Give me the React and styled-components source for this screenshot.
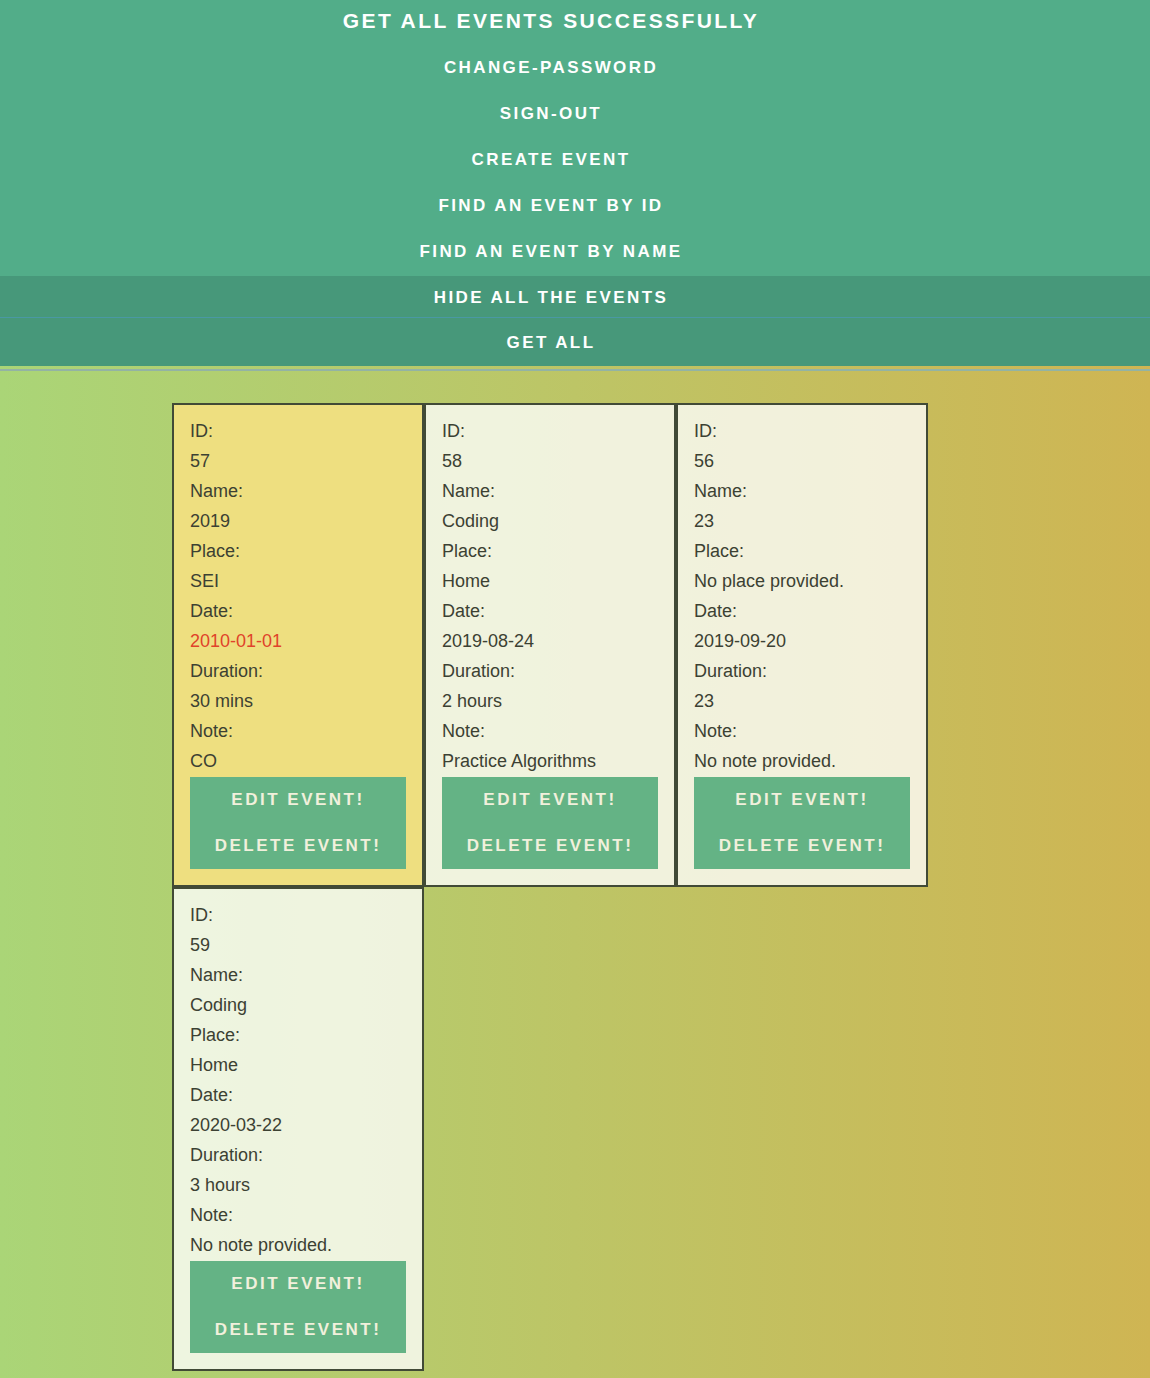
import React from 'react'
import styled, { createGlobalStyle } from 'styled-components'

const GlobalStyle = createGlobalStyle`
  html, body {
    margin: 0;
    padding: 0;
  }
  body {
    font-family: "Liberation Sans", Arial, sans-serif;
    background: linear-gradient(to right, #aad577, #bdc566 50%, #cfb553);
    min-height: 1378px;
  }
`

const Page = styled.div`
  min-height: 1378px;
`

const Nav = styled.nav`
  background: #52ad89;
  display: flex;
  flex-direction: column;
`

const Title = styled.h1`
  margin: 0;
  box-sizing: border-box;
  height: 44px;
  padding: 0 48px 3px 0;
  display: flex;
  align-items: center;
  justify-content: center;
  color: #fff;
  font-size: 21px;
  font-weight: bold;
  letter-spacing: 2.4px;
  text-transform: uppercase;
`

const NavItem = styled.a`
  box-sizing: border-box;
  height: ${p => p.h || 46}px;
  padding: 2px 48px 0 0;
  display: flex;
  align-items: center;
  justify-content: center;
  color: #fff;
  font-size: 17px;
  font-weight: bold;
  letter-spacing: 2.4px;
  text-transform: uppercase;
  cursor: pointer;
  background: ${p => (p.dark ? '#47987a' : 'transparent')};
  border-bottom: ${p => (p.line ? '1px solid #4a98a4' : 'none')};
`

const Spacer = styled.div`
  height: 2px;
`

const Rule = styled.hr`
  margin: 3px 0 0;
  border: 0;
  height: 2px;
  background: #93b3a4;
`

const Grid = styled.div`
  width: 756px;
  margin: 32px 0 0 172px;
  display: flex;
  flex-wrap: wrap;
`

const Card = styled.div`
  width: 252px;
  box-sizing: border-box;
  border: 2px solid #414a36;
  padding: 11px 16px 16px;
  background: ${p => (p.past ? '#eedf80' : 'rgba(255, 255, 255, 0.78)')};
  color: #3c4133;
  font-size: 18px;
`

const Line = styled.div`
  height: 30px;
  line-height: 30px;
  white-space: nowrap;
  color: ${p => (p.red ? '#e0432a' : 'inherit')};
`

const Buttons = styled.div`
  margin-top: 1px;
  background: #64b385;
  display: flex;
  flex-direction: column;
`

const Button = styled.button`
  height: 46px;
  border: 0;
  background: transparent;
  color: #f1f0dc;
  font-family: "Liberation Sans", Arial, sans-serif;
  font-size: 17px;
  font-weight: bold;
  letter-spacing: 2.5px;
  text-transform: uppercase;
  cursor: pointer;
`

const events = [
  { id: 57, name: '2019', place: 'SEI', date: '2010-01-01', duration: '30 mins', note: 'CO', past: true },
  { id: 58, name: 'Coding', place: 'Home', date: '2019-08-24', duration: '2 hours', note: 'Practice Algorithms' },
  { id: 56, name: '23', place: 'No place provided.', date: '2019-09-20', duration: '23', note: 'No note provided.' },
  { id: 59, name: 'Coding', place: 'Home', date: '2020-03-22', duration: '3 hours', note: 'No note provided.' },
]

const EventCard = ({ ev }) => (
  <Card past={ev.past}>
    <Line>ID:</Line>
    <Line>{ev.id}</Line>
    <Line>Name:</Line>
    <Line>{ev.name}</Line>
    <Line>Place:</Line>
    <Line>{ev.place}</Line>
    <Line>Date:</Line>
    <Line red={ev.past}>{ev.date}</Line>
    <Line>Duration:</Line>
    <Line>{ev.duration}</Line>
    <Line>Note:</Line>
    <Line>{ev.note}</Line>
    <Buttons>
      <Button>Edit Event!</Button>
      <Button>Delete Event!</Button>
    </Buttons>
  </Card>
)

export default function App() {
  return (
    <Page>
      <GlobalStyle />
      <Nav>
        <Title>Get all events successfully</Title>
        <NavItem>Change-password</NavItem>
        <NavItem>Sign-out</NavItem>
        <NavItem>Create Event</NavItem>
        <NavItem>Find an event by id</NavItem>
        <NavItem>Find an event by name</NavItem>
        <Spacer />
        <NavItem dark line h={42}>Hide all the events</NavItem>
        <NavItem dark h={48}>Get All</NavItem>
      </Nav>
      <Rule />
      <Grid>
        {events.map(ev => (
          <EventCard key={ev.id} ev={ev} />
        ))}
      </Grid>
    </Page>
  )
}
